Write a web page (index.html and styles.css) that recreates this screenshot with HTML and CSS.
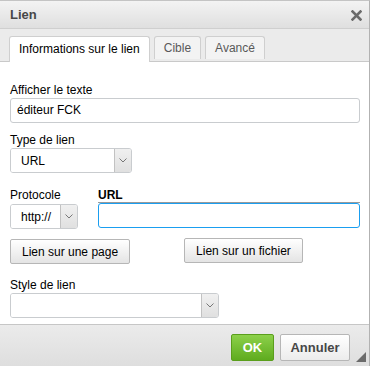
FILE: index.html
```html
<html lang="fr"><head>
    <meta charset="UTF-8">
    <title>Lien</title>
    <link rel="stylesheet" href="styles.css">
</head>
<body>
    <div class="dialog">
        <!-- Title bar -->
        <div class="title-bar">
            <span class="title">Lien</span>
            <svg class="close" width="11" height="11" viewBox="0 0 11 11">
                <path d="M1.5 1.5 L9.5 9.5 M9.5 1.5 L1.5 9.5" stroke="#6b6b6b" stroke-width="2.6" stroke-linecap="square"/>
            </svg>
        </div>

        <!-- Tabs -->
        <div class="tabs">
            <div class="tab active">Informations sur le lien</div>
            <div class="tab">Cible</div>
            <div class="tab">Avancé</div>
        </div>

        <!-- Tab content -->
        <div class="content">
            <label class="lbl">Afficher le texte</label>
            <div class="input wide">éditeur FCK</div>

            <label class="lbl">Type de lien</label>
            <div class="select type-select">
                <span class="select-value">URL</span>
                <span class="select-arrow"><svg width="8" height="5" viewBox="0 0 8 5"><path d="M0.5 0.5 L4 4 L7.5 0.5" stroke="#777" fill="none"/></svg></span>
            </div>

            <div class="url-row">
                <div class="proto-col">
                    <label class="lbl">Protocole</label>
                    <div class="select proto-select">
                        <span class="select-value">http://</span>
                        <span class="select-arrow"><svg width="8" height="5" viewBox="0 0 8 5"><path d="M0.5 0.5 L4 4 L7.5 0.5" stroke="#777" fill="none"/></svg></span>
                    </div>
                </div>
                <div class="url-col">
                    <label class="lbl bold">URL</label>
                    <div class="url-input"></div>
                </div>
            </div>

            <div class="btn-row">
                <button class="btn">Lien sur une page</button>
                <button class="btn file-btn">Lien sur un fichier</button>
            </div>

            <label class="lbl">Style de lien</label>
            <div class="select style-select">
                <span class="select-value"></span>
                <span class="select-arrow"><svg width="8" height="5" viewBox="0 0 8 5"><path d="M0.5 0.5 L4 4 L7.5 0.5" stroke="#777" fill="none"/></svg></span>
            </div>
        </div>

        <!-- Footer -->
        <div class="footer">
            <button class="ok-btn">OK</button>
            <button class="cancel-btn">Annuler</button>
            <span class="grip"></span>
        </div>
    </div>
</body></html>
```

FILE: styles.css
```css
body {
    margin: 0;
    font-family: "Liberation Sans", Arial, sans-serif;
    font-size: 12px;
    color: #000;
    background: #fff;
}
.dialog {
    width: 370px;
    height: 366px;
    border-top: 1px solid #c4c4c4;
    border-right: 1px solid #b2b2b2;
    display: flex;
    flex-direction: column;
    box-sizing: border-box;
}
.title-bar {
    height: 27px;
    display: flex;
    align-items: center;
    justify-content: space-between;
    padding: 0 7px 0 10px;
    background: linear-gradient(#f3f3f3, #dfdfdf);
    border-bottom: 1px solid #cfcfcf;
}
.title {
    font-weight: bold;
    font-size: 13px;
    color: #474747;
}
.close {
    margin-top: 1px;
}
.tabs {
    height: 25px;
    padding: 7px 0 0 9px;
    display: flex;
    gap: 4px;
    background: #ebebeb;
    border-bottom: 1px solid #c9c9c9;
    align-items: flex-end;
}
.tab {
    height: 23px;
    box-sizing: border-box;
    padding: 4px 9px 0;
    border: 1px solid #cfcfcf;
    border-bottom: none;
    border-radius: 3px 3px 0 0;
    background: #f3f3f3;
    color: #595959;
    align-self: flex-start;
}
.tab.active {
    height: 27px;
    margin-bottom: -1px;
    background: #fff;
    color: #000;
    padding-top: 5px;
    border-color: #cfcfcf;
}
.content {
    flex: 1;
    background: #fff;
    padding: 21px 10px 0 10px;
    display: flex;
    flex-direction: column;
    align-items: flex-start;
}
.lbl {
    display: block;
    line-height: 14px;
    margin-bottom: 1px;
}
.lbl.bold {
    font-weight: bold;
}
.input {
    height: 25px;
    box-sizing: border-box;
    border: 1px solid #c9cccf;
    border-radius: 3px;
    padding: 4px 6px 0;
    margin-bottom: 10px;
}
.input.wide {
    width: 350px;
}
.select {
    height: 25px;
    box-sizing: border-box;
    border: 1px solid #c9cccf;
    border-radius: 3px;
    display: flex;
    overflow: hidden;
}
.select-value {
    flex: 1;
    padding: 5px 0 0 10px;
    background: #fff;
}
.select-arrow {
    width: 16px;
    background: linear-gradient(#f0f0f0, #e0e0e0);
    border-left: 1px solid #c2c2c2;
    display: flex;
    align-items: center;
    justify-content: center;
}
.type-select {
    width: 122px;
}
.url-row {
    display: flex;
    gap: 20px;
    margin-top: 15px;
    width: 350px;
}
.proto-col {
    width: 68px;
}
.proto-select {
    width: 68px;
    margin-top: 2px;
}
.proto-select .select-value {
    padding-left: 10px;
}
.url-col {
    flex: 1;
}
.url-col .lbl {
    margin-bottom: 0;
    border-bottom: 1px solid #9a9a9a;
    padding-bottom: 0;
}
.url-input {
    height: 25px;
    box-sizing: border-box;
    border: 1px solid #1a9ef0;
    border-radius: 3px;
}
.btn-row {
    display: flex;
    margin-top: 10px;
    gap: 54px;
    margin-bottom: 14px;
}
.btn, .cancel-btn {
    font-family: inherit;
    font-size: 12px;
    height: 25px;
    padding: 0 11px;
    border: 1px solid #b6b6b6;
    border-radius: 2px;
    background: linear-gradient(#fff, #e4e4e4);
    color: #000;
}
.file-btn {
    margin-top: -1px;
}
.style-select {
    width: 209px;
}
.footer {
    height: 42px;
    border-top: 1px solid #c6c6c6;
    background: linear-gradient(#ebebeb, #dedede);
    display: flex;
    justify-content: flex-end;
    align-items: flex-start;
    padding: 9px 19px 0 0;
    gap: 6px;
    position: relative;
    box-sizing: border-box;
}
.ok-btn {
    font-family: inherit;
    font-weight: bold;
    font-size: 13px;
    height: 27px;
    width: 43px;
    color: #fff;
    border: 1px solid #5a9e1c;
    border-radius: 2px;
    background: linear-gradient(#8cd14a, #5fab1f);
}
.cancel-btn {
    font-weight: bold;
    font-size: 13px;
    height: 27px;
    width: 70px;
    padding: 0;
    color: #474747;
    background: linear-gradient(#fff, #ececec);
}
.grip {
    position: absolute;
    right: 3px;
    bottom: 4px;
    width: 0;
    height: 0;
    border-left: 10px solid transparent;
    border-bottom: 10px solid #6b6b6b;
}
```
